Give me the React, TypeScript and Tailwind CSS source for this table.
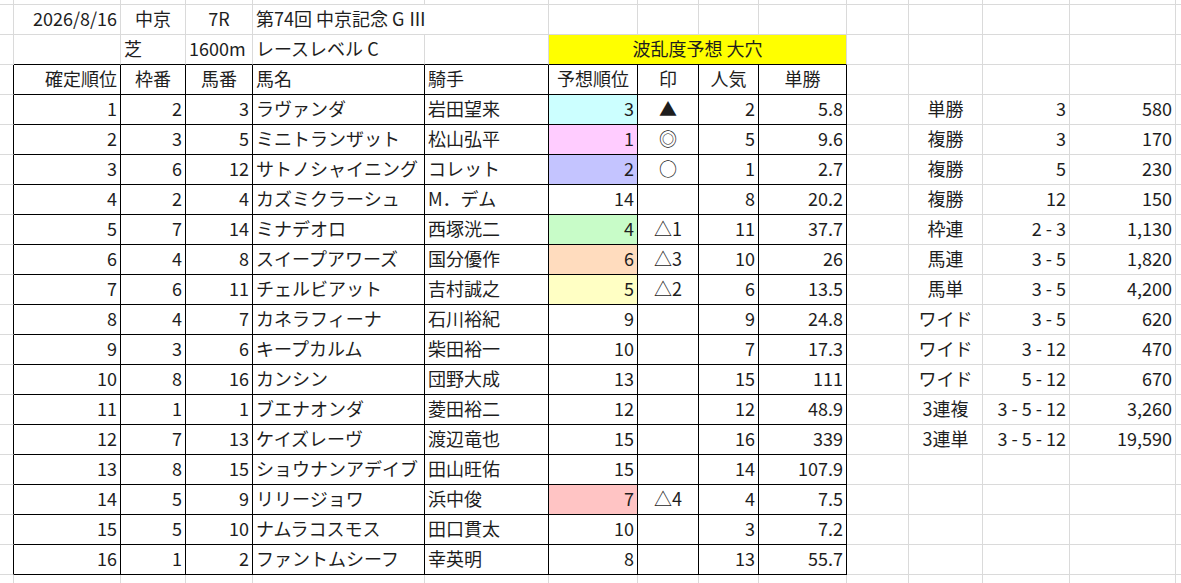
import React from 'react';

type Align = 'l' | 'c' | 'r';

interface Cell {
  t?: string;
  a?: Align;
  bg?: string;
  span?: 2 | 4;
  rb?: boolean; // black right edge
  bb?: boolean; // black bottom edge
}

const alignClass: Record<Align, string> = {
  l: 'justify-start',
  c: 'justify-center',
  r: 'justify-end',
};

const spanClass = { 2: 'col-span-2', 4: 'col-span-4' };

const horses: [string, string, string, string, string, string, string, string, string, string][] = [
  ['1', '2', '3', 'ラヴァンダ', '岩田望来', '3', '▲', '2', '5.8', 'bg-[#ccffff]'],
  ['2', '3', '5', 'ミニトランザット', '松山弘平', '1', '◎', '5', '9.6', 'bg-[#ffccff]'],
  ['3', '6', '12', 'サトノシャイニング', 'コレット', '2', '○', '1', '2.7', 'bg-[#c4c4ff]'],
  ['4', '2', '4', 'カズミクラーシュ', 'M．デム', '14', '', '8', '20.2', ''],
  ['5', '7', '14', 'ミナデオロ', '西塚洸二', '4', '△1', '11', '37.7', 'bg-[#c8fcc8]'],
  ['6', '4', '8', 'スイープアワーズ', '国分優作', '6', '△3', '10', '26', 'bg-[#ffdcbe]'],
  ['7', '6', '11', 'チェルビアット', '吉村誠之', '5', '△2', '6', '13.5', 'bg-[#ffffc4]'],
  ['8', '4', '7', 'カネラフィーナ', '石川裕紀', '9', '', '9', '24.8', ''],
  ['9', '3', '6', 'キープカルム', '柴田裕一', '10', '', '7', '17.3', ''],
  ['10', '8', '16', 'カンシン', '団野大成', '13', '', '15', '111', ''],
  ['11', '1', '1', 'ブエナオンダ', '菱田裕二', '12', '', '12', '48.9', ''],
  ['12', '7', '13', 'ケイズレーヴ', '渡辺竜也', '15', '', '16', '339', ''],
  ['13', '8', '15', 'ショウナンアデイブ', '田山旺佑', '15', '', '14', '107.9', ''],
  ['14', '5', '9', 'リリージョワ', '浜中俊', '7', '△4', '4', '7.5', 'bg-[#ffc4c4]'],
  ['15', '5', '10', 'ナムラコスモス', '田口貫太', '10', '', '3', '7.2', ''],
  ['16', '1', '2', 'ファントムシーフ', '幸英明', '8', '', '13', '55.7', ''],
];

const payouts: [string, string, string][] = [
  ['単勝', '3', '580'],
  ['複勝', '3', '170'],
  ['複勝', '5', '230'],
  ['複勝', '12', '150'],
  ['枠連', '2 - 3', '1,130'],
  ['馬連', '3 - 5', '1,820'],
  ['馬単', '3 - 5', '4,200'],
  ['ワイド', '3 - 5', '620'],
  ['ワイド', '3 - 12', '470'],
  ['ワイド', '5 - 12', '670'],
  ['3連複', '3 - 5 - 12', '3,260'],
  ['3連単', '3 - 5 - 12', '19,590'],
];

const empty = (n: number): Cell[] => Array.from({ length: n }, () => ({}));

function buildRows(): { h: string; cells: Cell[] }[] {
  const rows: { h: string; cells: Cell[] }[] = [];

  rows.push({ h: 'h-[4px]', cells: empty(15) });

  rows.push({
    h: 'h-[30px]',
    cells: [
      {},
      { t: '2026/8/16', a: 'r' },
      { t: '中京', a: 'c' },
      { t: '7R', a: 'c' },
      { t: '第74回 中京記念 G Ⅲ', a: 'l', span: 2 },
      ...empty(9),
    ],
  });

  rows.push({
    h: 'h-[30px]',
    cells: [
      {},
      { bb: true },
      { t: '芝', a: 'l', bb: true },
      { t: '1600m', a: 'l', bb: true },
      { t: 'レースレベル C', a: 'l', bb: true },
      { bb: true },
      { t: '波乱度予想 大穴', a: 'c', span: 4, bb: true, bg: 'bg-[#ffff00]' },
      ...empty(5),
    ],
  });

  const head: [string, Align][] = [
    ['確定順位', 'r'],
    ['枠番', 'c'],
    ['馬番', 'c'],
    ['馬名', 'l'],
    ['騎手', 'l'],
    ['予想順位', 'c'],
    ['印', 'c'],
    ['人気', 'c'],
    ['単勝', 'c'],
  ];
  rows.push({
    h: 'h-[30px]',
    cells: [{ rb: true }, ...head.map(([t, a]) => ({ t, a, rb: true, bb: true })), ...empty(5)],
  });

  horses.forEach((h, i) => {
    const p = payouts[i];
    rows.push({
      h: 'h-[30px]',
      cells: [
        { rb: true },
        { t: h[0], a: 'r', rb: true, bb: true },
        { t: h[1], a: 'r', rb: true, bb: true },
        { t: h[2], a: 'r', rb: true, bb: true },
        { t: h[3], a: 'l', rb: true, bb: true },
        { t: h[4], a: 'l', rb: true, bb: true },
        { t: h[5], a: 'r', rb: true, bb: true, bg: h[9] },
        { t: h[6], a: 'c', rb: true, bb: true },
        { t: h[7], a: 'r', rb: true, bb: true },
        { t: h[8], a: 'r', rb: true, bb: true },
        {},
        { t: p?.[0], a: 'c' },
        { t: p?.[1], a: 'r' },
        { t: p?.[2], a: 'r' },
        {},
      ],
    });
  });

  rows.push({ h: 'h-[30px]', cells: empty(15) });
  return rows;
}

export default function App() {
  const rows = buildRows();
  return (
    <div
      className="w-[1181px] h-[583px] overflow-hidden bg-white text-[#1e1e1e] text-[18px]"
      style={{ fontFamily: '"Noto Sans CJK JP", "Noto Sans", sans-serif' }}
    >
      <div className="grid w-[1236px] grid-cols-[14px_107px_65px_67px_172px_124px_89px_61px_60px_88px_62px_74px_87px_106px_60px]">
        {rows.map((row, r) =>
          row.cells.map((c, k) => (
            <div
              key={`${r}-${k}`}
              className={[
                'flex items-center overflow-visible whitespace-nowrap border-r border-b px-[3px] pb-[4px] leading-none',
                row.h,
                c.rb ? 'border-r-black' : 'border-r-[#dadada]',
                c.bb ? 'border-b-black' : 'border-b-[#dadada]',
                c.a ? alignClass[c.a] : '',
                c.span ? spanClass[c.span] : '',
                c.bg || '',
              ].join(' ')}
            >
              {c.t}
            </div>
          ))
        )}
      </div>
    </div>
  );
}
